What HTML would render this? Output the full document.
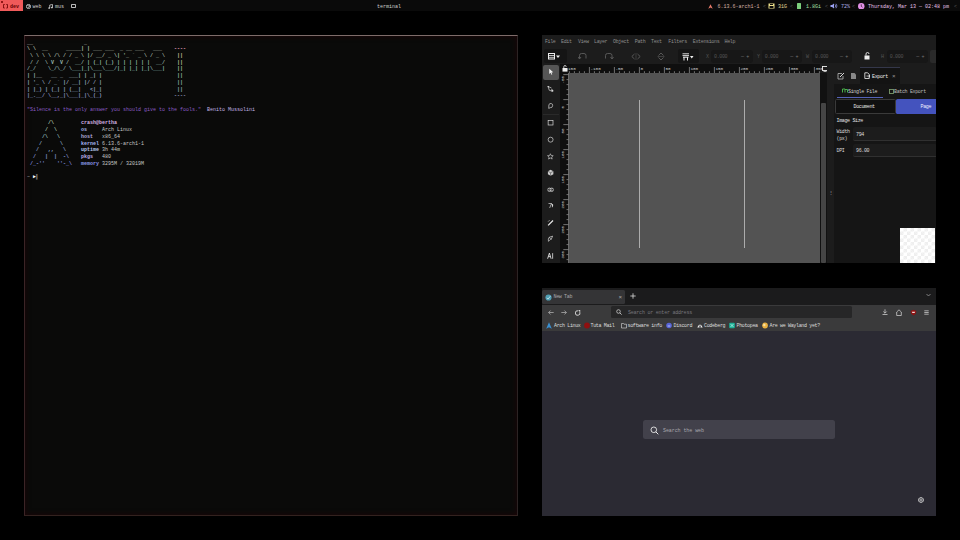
<!DOCTYPE html>
<html><head><meta charset="utf-8">
<style>
*{margin:0;padding:0;box-sizing:border-box}
html,body{width:960px;height:540px;overflow:hidden;background:#000;font-family:"Liberation Mono",monospace;}
.a{position:absolute;white-space:pre}
#bar{position:absolute;left:0;top:0;width:960px;height:11px;background:#0a0a0a;font-size:5px;line-height:11px;color:#d0d0d0;white-space:pre}
#bar .a{top:0;line-height:11px}
#ws1{position:absolute;left:0;top:0;width:23px;height:11px;background:#f05a5a}
#term{position:absolute;left:24px;top:35px;width:494px;height:481px;background:#0a0a09;border-top:1px solid #7e6c6a;border-right:1px solid #2c2424;border-bottom:1px solid #33221f;border-left:1px solid #3b2426;box-shadow:inset 0 0 5px 0.5px rgba(40,0,6,0.6)}
#tt{position:absolute;left:2px;top:3.5px;font-size:5px;line-height:6.73px;white-space:pre;color:#c8c8c8}
#ink{position:absolute;left:542px;top:35px;width:394px;height:228px;background:#1c1c1c;overflow:hidden}
#ink div[style*="font-size"]{margin-top:1.2px;letter-spacing:-0.35px}
#ff div[style*="font-size"]{margin-top:1px;letter-spacing:-0.35px}
#bar div.a:not([style*="background"]):not([style*="border"]){margin-top:1.9px}
#ff{position:absolute;left:542px;top:288px;width:394px;height:228px;background:#2b2a33;overflow:hidden}
</style></head><body>
<div id="bar">
  <div id="ws1"></div>
  <div class="a" style="left:1.2px;top:1.2px;width:1.4px;height:1.4px;background:#700000;border-radius:1px"></div>
  <svg class="a" style="left:2.7px;top:4px" width="5" height="4.5" viewBox="0 0 10 9"><path d="M3.5 1 H1 V8 H3.5 M6.5 1 H9 V8 H6.5" stroke="#6a0000" stroke-width="1.6" fill="none"/></svg><div class="a" style="left:10px;color:#640000;font-weight:bold">dev</div>
  <svg class="a" style="left:26px;top:3.5px" width="5" height="5" viewBox="0 0 10 10"><circle cx="5" cy="5" r="4.2" fill="none" stroke="#ddd" stroke-width="1.6"/><path d="M3 2 L6 5 L4 8 M6 2 L8 6" stroke="#ddd" stroke-width="1.4" fill="none"/></svg>
  <div class="a" style="left:32.5px">web</div>
  <svg class="a" style="left:48px;top:3.5px" width="5" height="5" viewBox="0 0 10 10"><path d="M3.5 8 V2 L9 1 V7" stroke="#ddd" stroke-width="1.5" fill="none"/><circle cx="2.3" cy="8" r="1.7" fill="#ddd"/><circle cx="7.8" cy="7" r="1.7" fill="#ddd"/></svg>
  <div class="a" style="left:55px">mus</div>
  <div class="a" style="left:71px;top:3.6px;width:5px;height:4.6px;border:0.7px solid #bbb;border-radius:0.8px"></div>
  <div class="a" style="left:377px;color:#cfcfcf">terminal</div>
  <svg class="a" style="left:708px;top:3.5px" width="5" height="5" viewBox="0 0 10 10"><path d="M5 0.5 L9.5 9.5 L5 7 L0.5 9.5 Z" fill="#e87a6a"/></svg>
  <div class="a" style="left:717.5px;color:#d9b3a8">6.13.6-arch1-1</div>
  <div class="a" style="left:763px;color:#555">&lt;</div>
  <svg class="a" style="left:768px;top:3px" width="7" height="6" viewBox="0 0 14 12"><path d="M1 1 H13 V11 H1 Z M3 6 H11 V10 H3 Z" fill="#ecdf8a" fill-rule="evenodd"/><rect x="4" y="2" width="6" height="2" fill="#0e0e0e"/></svg>
  <div class="a" style="left:778px;color:#e6dc9a">31G</div>
  <div class="a" style="left:790px;color:#555">&lt;</div>
  <div class="a" style="left:797px;top:3px;width:4px;height:5.5px;background:#7ccf7c;border-radius:0.5px"></div>
  <div class="a" style="left:806px;color:#a8e0a8">1.8Gi</div>
  <div class="a" style="left:825px;color:#555">&lt;</div>
  <svg class="a" style="left:830px;top:3px" width="8" height="6" viewBox="0 0 16 12"><path d="M1 4 H4 L8 1 V11 L4 8 H1 Z" fill="#9aa0f0"/><path d="M10 3 Q13 6 10 9 M12 1.5 Q16 6 12 10.5" stroke="#9aa0f0" stroke-width="1.4" fill="none"/></svg>
  <div class="a" style="left:841px;color:#b0b0e8">72%</div>
  <div class="a" style="left:852px;color:#555">&lt;</div>
  <svg class="a" style="left:858px;top:2.5px" width="6.5" height="6.5" viewBox="0 0 10 10"><circle cx="5" cy="5" r="5" fill="#e291e6"/><path d="M5 2 V5 L7 6.5" stroke="#0e0e0e" stroke-width="1" fill="none"/></svg>
  <div class="a" style="left:868px;color:#e8c2ea">Thursday, Mar 13 &#8212; 02:48 pm</div>
  <div class="a" style="left:954px;color:#555">&lt;</div>
</div>

<div id="term">
<div id="tt"><span style="font-weight:bold;color:#c4c4bc">__                 _                          </span>
<span style="font-weight:bold;color:#b8c0b0">\ \  __      _____| | ___ ___  _ __ ___   ___ </span>
<span style="font-weight:bold;color:#a8bca8"> \ \ \ \ /\ / / _ \ |/ __/ _ \| '_ ` _ \ / _ \</span>
<span style="font-weight:bold;color:#98b8ac"> / /  \ V  V /  __/ | (_| (_) | | | | | |  __/</span>
<span style="font-weight:bold;color:#8cb4b0">/_/    \_/\_/ \___|_|\___\___/|_| |_| |_|\___|</span>
<span style="font-weight:bold;color:#a0b0b8">| |__   __ _  ___| | _| |</span>
<span style="font-weight:bold;color:#98a8c0">| '_ \ / _` |/ __| |/ / |</span>
<span style="font-weight:bold;color:#94a0c4">| |_) | (_| | (__|   &lt;|_|</span>
<span style="font-weight:bold;color:#9098c8">|_.__/ \__,_|\___|_|\_(_)</span>

<span style="color:#8a5cc4">"Silence is the only answer you should give to the fools."</span>  <span style="color:#c4b4e6">Benito Mussolini</span>

<span style="font-weight:bold;color:#b8d0b0">       /\         </span><b style="color:#d4b2e2">crash@bertha</b>
<span style="font-weight:bold;color:#a8c8b4">      /  \        </span><b style="color:#a8b4e8">os</b>     Arch Linux
<span style="font-weight:bold;color:#98c0c0">     /\   \       </span><b style="color:#b4acdc">host</b>   x86_64
<span style="font-weight:bold;color:#90b4cc">    /      \      </span><b style="color:#a4b4f0">kernel</b> 6.13.6-arch1-1
<span style="font-weight:bold;color:#8aa8d4">   /   ,,   \     </span><b style="color:#b8c4ec">uptime</b> 3h 44m
<span style="font-weight:bold;color:#8a9cdc">  /   |  |  -\    </span><b style="color:#bcaee4">pkgs</b>   480
<span style="font-weight:bold;color:#8890e0"> /_-''    ''-_\   </span><b style="color:#8c98ec">memory</b> 3295M / 32019M

<span style="color:#888">~</span> <span style="color:#fff">&#9654;</span><span style="color:#666">&#9612;</span></div>
<div class="a" style="left:149px;top:10.2px;font-size:5px;line-height:6.73px;font-weight:bold"><span style="color:#eaa0c4">----</span>
<span style="color:#d8c0a0"> ||</span>
<span style="color:#c4c4a0"> ||</span>
<span style="color:#a8c0a0"> ||</span>
<span style="color:#98b8a8"> ||</span>
<span style="color:#90b0b0"> ||</span>
<span style="color:#8ca8b8"> ||</span>
<span style="color:#9090b8">----</span></div>
</div>
<div id="ink">
<div class="a" style="left:2.9px;top:2.5px;font-size:5px;line-height:7px;color:#8e8e8e">File</div>
<div class="a" style="left:19.0px;top:2.5px;font-size:5px;line-height:7px;color:#8e8e8e">Edit</div>
<div class="a" style="left:36.0px;top:2.5px;font-size:5px;line-height:7px;color:#8e8e8e">View</div>
<div class="a" style="left:52.0px;top:2.5px;font-size:5px;line-height:7px;color:#8e8e8e">Layer</div>
<div class="a" style="left:71.0px;top:2.5px;font-size:5px;line-height:7px;color:#8e8e8e">Object</div>
<div class="a" style="left:92.8px;top:2.5px;font-size:5px;line-height:7px;color:#8e8e8e">Path</div>
<div class="a" style="left:109.0px;top:2.5px;font-size:5px;line-height:7px;color:#8e8e8e">Text</div>
<div class="a" style="left:126.3px;top:2.5px;font-size:5px;line-height:7px;color:#8e8e8e">Filters</div>
<div class="a" style="left:150.8px;top:2.5px;font-size:5px;line-height:7px;color:#8e8e8e">Extensions</div>
<div class="a" style="left:182.5px;top:2.5px;font-size:5px;line-height:7px;color:#8e8e8e">Help</div>
<div class="a" style="left:2px;top:14.4px;width:22.5px;height:13.6px;background:#151515;border-radius:2px"></div>
<svg class="a" style="left:6px;top:18px" width="13" height="7" viewBox="0 0 13 7"><rect x="0.5" y="0.5" width="6" height="5.5" fill="none" stroke="#eee" stroke-width="1"/><path d="M0.5 2.5H6.5M0.5 4.3H6.5" stroke="#eee" stroke-width="0.8"/><path d="M8 2.5 L12 2.5 L10 5 Z" fill="#eee"/></svg>
<svg class="a" style="left:36.2px;top:16.8px" width="10" height="9" viewBox="0 0 10 9"><path d="M1.5 6.5 V3.5 Q1.5 1.5 3.5 1.5 H6 Q8 1.5 8 3.5 V6.5" stroke="#5e5e5e" stroke-width="0.9" fill="none"/><path d="M0 5 L1.5 7 L3 5" stroke="#5e5e5e" stroke-width="0.9" fill="none"/></svg>
<svg class="a" style="left:61.7px;top:16.8px" width="10" height="9" viewBox="0 0 10 9"><path d="M1.5 6.5 V3.5 Q1.5 1.5 3.5 1.5 H6 Q8 1.5 8 3.5 V6.5" stroke="#5e5e5e" stroke-width="0.9" fill="none"/><path d="M6.5 5 L8 7 L9.5 5" stroke="#5e5e5e" stroke-width="0.9" fill="none"/></svg>
<svg class="a" style="left:88.5px;top:16.8px" width="10" height="9" viewBox="0 0 10 9"><path d="M3.5 2 L0.8 4.5 L3.5 7 M6.5 2 L9.2 4.5 L6.5 7" stroke="#5e5e5e" stroke-width="0.9" fill="none"/><path d="M5 1 V8" stroke="#555" stroke-width="0.6"/></svg>
<svg class="a" style="left:113.7px;top:16.8px" width="10" height="9" viewBox="0 0 10 9"><path d="M2.5 3.5 L5 1 L7.5 3.5 M2.5 5.5 L5 8 L7.5 5.5" stroke="#5e5e5e" stroke-width="0.9" fill="none"/><path d="M1.5 4.5 H8.5" stroke="#555" stroke-width="0.6"/></svg>
<div class="a" style="left:136px;top:14.4px;width:21.4px;height:13.6px;background:#151515;border-radius:2px"></div>
<svg class="a" style="left:140px;top:17.5px" width="12" height="8" viewBox="0 0 12 8"><path d="M0.5 0.8H7M0.5 2.6H7" stroke="#eee" stroke-width="0.9"/><path d="M1 4.2H6.5M2 4.2V7.5M5.5 4.2V7.5" stroke="#eee" stroke-width="1"/><path d="M8 3 L11.5 3 L9.75 5.5 Z" fill="#eee"/></svg>
<div class="a" style="left:164.0px;top:18px;font-size:5px;line-height:7px;color:#555">X</div>
<div class="a" style="left:169.0px;top:14.5px;width:42.0px;height:13px;background:#171717;border-radius:3px"></div>
<div class="a" style="left:172.0px;top:18px;font-size:5px;line-height:7px;color:#555">0.000</div>
<div class="a" style="left:199.0px;top:18px;font-size:5px;line-height:7px;color:#777">&#8212; +</div>
<div class="a" style="left:215.0px;top:18px;font-size:5px;line-height:7px;color:#555">Y</div>
<div class="a" style="left:219.8px;top:14.5px;width:40.5px;height:13px;background:#171717;border-radius:3px"></div>
<div class="a" style="left:222.8px;top:18px;font-size:5px;line-height:7px;color:#555">0.000</div>
<div class="a" style="left:248.3px;top:18px;font-size:5px;line-height:7px;color:#777">&#8212; +</div>
<div class="a" style="left:264.0px;top:18px;font-size:5px;line-height:7px;color:#555">W</div>
<div class="a" style="left:270.0px;top:14.5px;width:40.0px;height:13px;background:#171717;border-radius:3px"></div>
<div class="a" style="left:273.0px;top:18px;font-size:5px;line-height:7px;color:#555">0.000</div>
<div class="a" style="left:298.0px;top:18px;font-size:5px;line-height:7px;color:#777">&#8212; +</div>
<div class="a" style="left:339.0px;top:18px;font-size:5px;line-height:7px;color:#555">H</div>
<div class="a" style="left:344.8px;top:14.5px;width:41.5px;height:13px;background:#171717;border-radius:3px"></div>
<div class="a" style="left:347.8px;top:18px;font-size:5px;line-height:7px;color:#555">0.000</div>
<div class="a" style="left:374.3px;top:18px;font-size:5px;line-height:7px;color:#777">&#8212; +</div>
<svg class="a" style="left:322px;top:17px" width="7" height="8" viewBox="0 0 7 8"><rect x="0.5" y="3.5" width="5" height="4" fill="#eee"/><path d="M2 3.5 V2 Q2 0.5 3.5 0.5 Q5 0.5 5 2" stroke="#eee" stroke-width="0.9" fill="none"/></svg>
<div class="a" style="left:388px;top:14.5px;width:8px;height:13px;background:#2a2a2a;border-radius:2px"></div>
<div class="a" style="left:1px;top:29.6px;width:15.5px;height:15.8px;background:#555555;border-radius:2px"></div>
<div class="a" style="left:1px;top:78.7px;width:16px;height:0.6px;background:#2a2a2a"></div>
<svg class="a" style="left:5.4px;top:33.2px" width="7.5" height="7.5" viewBox="0 0 10 10"><path d="M3 1 L3 8 L4.8 6.3 L6 9 L7 8.5 L5.9 5.9 L8.3 5.8 Z" fill="#f2f2f2"/></svg>
<svg class="a" style="left:5.4px;top:50.2px" width="7.5" height="7.5" viewBox="0 0 10 10"><path d="M1.5 2 L6 4 M1.5 2 L3 7 L8 8.5" stroke="#ddd" stroke-width="0.9" fill="none"/><rect x="0.8" y="1.3" width="1.6" height="1.6" fill="#ddd"/><path d="M6 5 L6 9 L7 8 L8 9.3 L8.5 9 L7.6 7.7 L9 7.6 Z" fill="#ddd"/></svg>
<svg class="a" style="left:5.4px;top:67.2px" width="7.5" height="7.5" viewBox="0 0 10 10"><path d="M2.5 4 Q3 1.5 5.5 2 Q8 2.5 7.5 5 Q7 8 4.5 7.5" stroke="#ddd" stroke-width="0.9" fill="none"/><path d="M2.5 4 L2.3 8.5 L4.5 7.5" stroke="#ddd" stroke-width="0.9" fill="none"/></svg>
<svg class="a" style="left:5.4px;top:84.2px" width="7.5" height="7.5" viewBox="0 0 10 10"><rect x="1.5" y="1.8" width="6.5" height="6.2" fill="none" stroke="#ddd" stroke-width="0.9"/></svg>
<svg class="a" style="left:5.4px;top:101.2px" width="7.5" height="7.5" viewBox="0 0 10 10"><circle cx="4.8" cy="4.9" r="3.3" fill="none" stroke="#ddd" stroke-width="0.9"/></svg>
<svg class="a" style="left:5.4px;top:118.2px" width="7.5" height="7.5" viewBox="0 0 10 10"><path d="M4.5 1 L5.6 3.4 L8.3 3.6 L6.2 5.4 L6.9 8.1 L4.5 6.7 L2.1 8.1 L2.8 5.4 L0.7 3.6 L3.4 3.4 Z" fill="none" stroke="#ddd" stroke-width="0.8"/></svg>
<svg class="a" style="left:5.4px;top:134.2px" width="7.5" height="7.5" viewBox="0 0 10 10"><path d="M4.8 1 L8.5 3 L8.5 7 L4.8 9 L1.2 7 L1.2 3 Z" fill="#ccc"/><path d="M4.8 5 L8.5 3 M4.8 5 L4.8 9 M4.8 5 L1.2 3" stroke="#1e1e1e" stroke-width="0.6"/></svg>
<svg class="a" style="left:5.4px;top:150.8px" width="7.5" height="7.5" viewBox="0 0 10 10"><circle cx="3.3" cy="5" r="2.3" fill="none" stroke="#ddd" stroke-width="0.8"/><circle cx="6.3" cy="5" r="2.3" fill="none" stroke="#ddd" stroke-width="0.8"/><path d="M1 3.5 H8.5 M1 6.5 H8.5" stroke="#ddd" stroke-width="0.5"/></svg>
<svg class="a" style="left:5.4px;top:167.2px" width="7.5" height="7.5" viewBox="0 0 10 10"><path d="M2 2 L6 2 L3.5 8 M6 2 Q8.5 4 7 7" stroke="#ddd" stroke-width="0.9" fill="none"/><path d="M6 2 L8.3 3.5 L7 7 Z" fill="#ddd"/></svg>
<svg class="a" style="left:5.4px;top:184.2px" width="7.5" height="7.5" viewBox="0 0 10 10"><path d="M1.5 8.5 L8 2" stroke="#eee" stroke-width="1.6"/><path d="M1.5 3.5 L3.5 1.5" stroke="#eee" stroke-width="0.8"/></svg>
<svg class="a" style="left:5.4px;top:200.2px" width="7.5" height="7.5" viewBox="0 0 10 10"><path d="M2 8.5 Q1 5 3 3 M3 3 L7.5 1.5 L5.5 6 Z" stroke="#ddd" stroke-width="0.9" fill="none"/><path d="M2 8.5 L5 5.5" stroke="#ddd" stroke-width="0.8"/></svg>
<svg class="a" style="left:5.4px;top:217.2px" width="7.5" height="7.5" viewBox="0 0 10 10"><path d="M0.8 9 L3.2 1.5 L5.5 9 M1.8 6.2 H4.6" stroke="#f2f2f2" stroke-width="1.1" fill="none"/><path d="M7.5 1.5 V9" stroke="#f2f2f2" stroke-width="1"/></svg>
<div class="a" style="left:17.7px;top:29px;width:260.3px;height:9px;background:#0f0f0f"></div>
<div class="a" style="left:17.7px;top:38px;width:8.6px;height:190px;background:#0f0f0f"></div>
<div class="a" style="left:26.3px;top:38px;width:251.7px;height:190px;background:#535353"></div>
<div class="a" style="left:25.8px;top:38px;width:0.8px;height:190px;background:#6a6a6a"></div>
<div class="a" style="left:97px;top:64.6px;width:1px;height:148.2px;background:#acacac"></div>
<div class="a" style="left:202px;top:64.6px;width:1px;height:148.2px;background:#acacac"></div>
<svg class="a" style="left:0;top:0" width="394" height="228" viewBox="0 0 394 228"><path d="M27.40 36.2 V38.0" stroke="#d0d0d0" stroke-width="0.5"/><path d="M32.40 36.2 V38.0" stroke="#d0d0d0" stroke-width="0.5"/><path d="M37.40 36.2 V38.0" stroke="#d0d0d0" stroke-width="0.5"/><path d="M42.40 36.2 V38.0" stroke="#d0d0d0" stroke-width="0.5"/><text x="23.4" y="35.4" font-size="4.3" fill="#d0d0d0" font-family="Liberation Mono">-150</text><path d="M47.40 32.0 V38.0" stroke="#d0d0d0" stroke-width="0.5"/><path d="M52.40 36.2 V38.0" stroke="#d0d0d0" stroke-width="0.5"/><path d="M57.40 36.2 V38.0" stroke="#d0d0d0" stroke-width="0.5"/><path d="M62.40 36.2 V38.0" stroke="#d0d0d0" stroke-width="0.5"/><path d="M67.40 36.2 V38.0" stroke="#d0d0d0" stroke-width="0.5"/><text x="48.4" y="35.4" font-size="4.3" fill="#d0d0d0" font-family="Liberation Mono">-100</text><path d="M72.40 32.0 V38.0" stroke="#d0d0d0" stroke-width="0.5"/><path d="M77.40 36.2 V38.0" stroke="#d0d0d0" stroke-width="0.5"/><path d="M82.40 36.2 V38.0" stroke="#d0d0d0" stroke-width="0.5"/><path d="M87.40 36.2 V38.0" stroke="#d0d0d0" stroke-width="0.5"/><path d="M92.40 36.2 V38.0" stroke="#d0d0d0" stroke-width="0.5"/><text x="73.4" y="35.4" font-size="4.3" fill="#d0d0d0" font-family="Liberation Mono">-50</text><path d="M97.40 32.0 V38.0" stroke="#d0d0d0" stroke-width="0.5"/><path d="M102.40 36.2 V38.0" stroke="#d0d0d0" stroke-width="0.5"/><path d="M107.40 36.2 V38.0" stroke="#d0d0d0" stroke-width="0.5"/><path d="M112.40 36.2 V38.0" stroke="#d0d0d0" stroke-width="0.5"/><path d="M117.40 36.2 V38.0" stroke="#d0d0d0" stroke-width="0.5"/><text x="98.4" y="35.4" font-size="4.3" fill="#d0d0d0" font-family="Liberation Mono">0</text><path d="M122.40 32.0 V38.0" stroke="#d0d0d0" stroke-width="0.5"/><path d="M127.40 36.2 V38.0" stroke="#d0d0d0" stroke-width="0.5"/><path d="M132.40 36.2 V38.0" stroke="#d0d0d0" stroke-width="0.5"/><path d="M137.40 36.2 V38.0" stroke="#d0d0d0" stroke-width="0.5"/><path d="M142.40 36.2 V38.0" stroke="#d0d0d0" stroke-width="0.5"/><text x="123.4" y="35.4" font-size="4.3" fill="#d0d0d0" font-family="Liberation Mono">50</text><path d="M147.40 32.0 V38.0" stroke="#d0d0d0" stroke-width="0.5"/><path d="M152.40 36.2 V38.0" stroke="#d0d0d0" stroke-width="0.5"/><path d="M157.40 36.2 V38.0" stroke="#d0d0d0" stroke-width="0.5"/><path d="M162.40 36.2 V38.0" stroke="#d0d0d0" stroke-width="0.5"/><path d="M167.40 36.2 V38.0" stroke="#d0d0d0" stroke-width="0.5"/><text x="148.4" y="35.4" font-size="4.3" fill="#d0d0d0" font-family="Liberation Mono">100</text><path d="M172.40 32.0 V38.0" stroke="#d0d0d0" stroke-width="0.5"/><path d="M177.40 36.2 V38.0" stroke="#d0d0d0" stroke-width="0.5"/><path d="M182.40 36.2 V38.0" stroke="#d0d0d0" stroke-width="0.5"/><path d="M187.40 36.2 V38.0" stroke="#d0d0d0" stroke-width="0.5"/><path d="M192.40 36.2 V38.0" stroke="#d0d0d0" stroke-width="0.5"/><text x="173.4" y="35.4" font-size="4.3" fill="#d0d0d0" font-family="Liberation Mono">150</text><path d="M197.40 32.0 V38.0" stroke="#d0d0d0" stroke-width="0.5"/><path d="M202.40 36.2 V38.0" stroke="#d0d0d0" stroke-width="0.5"/><path d="M207.40 36.2 V38.0" stroke="#d0d0d0" stroke-width="0.5"/><path d="M212.40 36.2 V38.0" stroke="#d0d0d0" stroke-width="0.5"/><path d="M217.40 36.2 V38.0" stroke="#d0d0d0" stroke-width="0.5"/><text x="198.4" y="35.4" font-size="4.3" fill="#d0d0d0" font-family="Liberation Mono">200</text><path d="M222.40 32.0 V38.0" stroke="#d0d0d0" stroke-width="0.5"/><path d="M227.40 36.2 V38.0" stroke="#d0d0d0" stroke-width="0.5"/><path d="M232.40 36.2 V38.0" stroke="#d0d0d0" stroke-width="0.5"/><path d="M237.40 36.2 V38.0" stroke="#d0d0d0" stroke-width="0.5"/><path d="M242.40 36.2 V38.0" stroke="#d0d0d0" stroke-width="0.5"/><text x="223.4" y="35.4" font-size="4.3" fill="#d0d0d0" font-family="Liberation Mono">250</text><path d="M247.40 32.0 V38.0" stroke="#d0d0d0" stroke-width="0.5"/><path d="M252.40 36.2 V38.0" stroke="#d0d0d0" stroke-width="0.5"/><path d="M257.40 36.2 V38.0" stroke="#d0d0d0" stroke-width="0.5"/><path d="M262.40 36.2 V38.0" stroke="#d0d0d0" stroke-width="0.5"/><path d="M267.40 36.2 V38.0" stroke="#d0d0d0" stroke-width="0.5"/><text x="248.4" y="35.4" font-size="4.3" fill="#d0d0d0" font-family="Liberation Mono">300</text><path d="M272.40 32.0 V38.0" stroke="#d0d0d0" stroke-width="0.5"/><path d="M277.40 36.2 V38.0" stroke="#d0d0d0" stroke-width="0.5"/><text x="273.4" y="35.4" font-size="4.3" fill="#d0d0d0" font-family="Liberation Mono">350</text><path d="M21.3 39.60 H26.3" stroke="#d0d0d0" stroke-width="0.5"/><path d="M24.5 44.60 H26.3" stroke="#d0d0d0" stroke-width="0.5"/><path d="M24.5 49.60 H26.3" stroke="#d0d0d0" stroke-width="0.5"/><path d="M24.5 54.60 H26.3" stroke="#d0d0d0" stroke-width="0.5"/><path d="M24.5 59.60 H26.3" stroke="#d0d0d0" stroke-width="0.5"/><text transform="translate(22.3 48.6) rotate(-90)" font-size="4.3" fill="#d0d0d0" font-family="Liberation Mono">-50</text><path d="M21.3 64.60 H26.3" stroke="#d0d0d0" stroke-width="0.5"/><path d="M24.5 69.60 H26.3" stroke="#d0d0d0" stroke-width="0.5"/><path d="M24.5 74.60 H26.3" stroke="#d0d0d0" stroke-width="0.5"/><path d="M24.5 79.60 H26.3" stroke="#d0d0d0" stroke-width="0.5"/><path d="M24.5 84.60 H26.3" stroke="#d0d0d0" stroke-width="0.5"/><text transform="translate(22.3 73.6) rotate(-90)" font-size="4.3" fill="#d0d0d0" font-family="Liberation Mono">0</text><path d="M21.3 89.60 H26.3" stroke="#d0d0d0" stroke-width="0.5"/><path d="M24.5 94.60 H26.3" stroke="#d0d0d0" stroke-width="0.5"/><path d="M24.5 99.60 H26.3" stroke="#d0d0d0" stroke-width="0.5"/><path d="M24.5 104.60 H26.3" stroke="#d0d0d0" stroke-width="0.5"/><path d="M24.5 109.60 H26.3" stroke="#d0d0d0" stroke-width="0.5"/><text transform="translate(22.3 98.6) rotate(-90)" font-size="4.3" fill="#d0d0d0" font-family="Liberation Mono">50</text><path d="M21.3 114.60 H26.3" stroke="#d0d0d0" stroke-width="0.5"/><path d="M24.5 119.60 H26.3" stroke="#d0d0d0" stroke-width="0.5"/><path d="M24.5 124.60 H26.3" stroke="#d0d0d0" stroke-width="0.5"/><path d="M24.5 129.60 H26.3" stroke="#d0d0d0" stroke-width="0.5"/><path d="M24.5 134.60 H26.3" stroke="#d0d0d0" stroke-width="0.5"/><text transform="translate(22.3 123.6) rotate(-90)" font-size="4.3" fill="#d0d0d0" font-family="Liberation Mono">100</text><path d="M21.3 139.60 H26.3" stroke="#d0d0d0" stroke-width="0.5"/><path d="M24.5 144.60 H26.3" stroke="#d0d0d0" stroke-width="0.5"/><path d="M24.5 149.60 H26.3" stroke="#d0d0d0" stroke-width="0.5"/><path d="M24.5 154.60 H26.3" stroke="#d0d0d0" stroke-width="0.5"/><path d="M24.5 159.60 H26.3" stroke="#d0d0d0" stroke-width="0.5"/><text transform="translate(22.3 148.6) rotate(-90)" font-size="4.3" fill="#d0d0d0" font-family="Liberation Mono">150</text><path d="M21.3 164.60 H26.3" stroke="#d0d0d0" stroke-width="0.5"/><path d="M24.5 169.60 H26.3" stroke="#d0d0d0" stroke-width="0.5"/><path d="M24.5 174.60 H26.3" stroke="#d0d0d0" stroke-width="0.5"/><path d="M24.5 179.60 H26.3" stroke="#d0d0d0" stroke-width="0.5"/><path d="M24.5 184.60 H26.3" stroke="#d0d0d0" stroke-width="0.5"/><text transform="translate(22.3 173.6) rotate(-90)" font-size="4.3" fill="#d0d0d0" font-family="Liberation Mono">200</text><path d="M21.3 189.60 H26.3" stroke="#d0d0d0" stroke-width="0.5"/><path d="M24.5 194.60 H26.3" stroke="#d0d0d0" stroke-width="0.5"/><path d="M24.5 199.60 H26.3" stroke="#d0d0d0" stroke-width="0.5"/><path d="M24.5 204.60 H26.3" stroke="#d0d0d0" stroke-width="0.5"/><path d="M24.5 209.60 H26.3" stroke="#d0d0d0" stroke-width="0.5"/><text transform="translate(22.3 198.6) rotate(-90)" font-size="4.3" fill="#d0d0d0" font-family="Liberation Mono">250</text><path d="M21.3 214.60 H26.3" stroke="#d0d0d0" stroke-width="0.5"/><path d="M24.5 219.60 H26.3" stroke="#d0d0d0" stroke-width="0.5"/><path d="M24.5 224.60 H26.3" stroke="#d0d0d0" stroke-width="0.5"/><text transform="translate(22.3 223.6) rotate(-90)" font-size="4.3" fill="#d0d0d0" font-family="Liberation Mono">300</text></svg>
<svg class="a" style="left:19.5px;top:30px" width="6" height="7" viewBox="0 0 6 7"><rect x="0.5" y="3" width="5" height="3.6" fill="#eee"/><path d="M1.8 3 V1.8 Q1.8 0.5 3 0.5 Q4.2 0.5 4.2 1.8" stroke="#eee" stroke-width="0.8" fill="none"/></svg>
<svg class="a" style="left:279.5px;top:30.5px" width="6" height="6" viewBox="0 0 6 6"><rect x="0.5" y="0.5" width="5" height="4" fill="none" stroke="#eee" stroke-width="0.9"/><path d="M1.5 5.6 H4.5" stroke="#eee" stroke-width="0.8"/></svg>
<div class="a" style="left:278px;top:38px;width:7px;height:190px;background:#111"></div>
<div class="a" style="left:279.2px;top:67.6px;width:4.8px;height:160.4px;background:#454545;border-radius:1px"></div>
<div class="a" style="left:285px;top:29px;width:109px;height:199px;background:#1c1c1c"></div>
<div class="a" style="left:291.5px;top:49px;width:102.5px;height:179px;background:#151515"></div>
<div class="a" style="left:286.5px;top:155px;font-size:4px;line-height:4px;color:#aaa">&#8942;</div>
<svg class="a" style="left:295px;top:36.5px" width="8" height="8" viewBox="0 0 8 8"><path d="M1 1.5 H5 M1 1.5 V7 H6 V4" stroke="#bbb" stroke-width="0.8" fill="none"/><path d="M3 5 L7 1" stroke="#ddd" stroke-width="1"/></svg>
<svg class="a" style="left:308px;top:36.5px" width="7" height="8" viewBox="0 0 7 8"><path d="M1 1 H4.5 L6 2.5 V7 H1 Z" fill="#888"/></svg>
<div class="a" style="left:318px;top:32.4px;width:40px;height:16.6px;background:#131313;border-top:1px solid #34374a"></div>
<svg class="a" style="left:321.5px;top:37px" width="6.5" height="7.3" viewBox="0 0 8 9"><path d="M1 1 H4.5 L6.5 3 V8 H1 Z" fill="none" stroke="#f0f0f0" stroke-width="1"/><path d="M3 5 H7.5 M6 3.6 L7.6 5 L6 6.4" stroke="#f0f0f0" stroke-width="0.9" fill="none"/></svg>
<div class="a" style="left:330px;top:37.4px;font-size:5px;line-height:7px;color:#eee">Export</div>
<div class="a" style="left:350px;top:36.6px;font-size:6px;line-height:7px;color:#999">&#215;</div>
<svg class="a" style="left:300px;top:53.2px" width="6" height="5" viewBox="0 0 6 5"><path d="M0.5 4.5 V1 H3 V4.5 M3 1.5 H5.5 V4.5" stroke="#49b04a" stroke-width="1" fill="none"/></svg>
<div class="a" style="left:306px;top:52.8px;font-size:5px;line-height:7px;color:#cfcfcf">Single File</div>
<div class="a" style="left:295px;top:61.5px;width:46px;height:0.9px;background:#5563b8"></div>
<svg class="a" style="left:347px;top:53.6px" width="5" height="5" viewBox="0 0 5 5"><rect x="0.5" y="0.5" width="4" height="4" fill="none" stroke="#7a9a6a" stroke-width="0.9"/></svg>
<div class="a" style="left:352px;top:52.8px;font-size:5px;line-height:7px;color:#bdbdbd">Batch Export</div>
<div class="a" style="left:292.6px;top:64px;width:61px;height:14.6px;background:#101010;border:0.8px solid #3a3a3a;border-radius:1.5px"></div>
<div class="a" style="left:311.5px;top:67.8px;font-size:5px;line-height:7px;color:#e6e6e6">Document</div>
<div class="a" style="left:354px;top:64px;width:42px;height:14.6px;background:#4453be;border-radius:1.5px"></div>
<div class="a" style="left:378.5px;top:67.8px;font-size:5px;line-height:7px;color:#eef">Page</div>
<div class="a" style="left:294.5px;top:82px;font-size:5px;line-height:7px;color:#e0e0e0">Image Size</div>
<div class="a" style="left:294.5px;top:93px;font-size:5px;line-height:6.6px;color:#d8d8d8">Width<br>(px)</div>
<div class="a" style="left:311.3px;top:92.2px;width:84px;height:14.3px;background:#1c1c1c;border-bottom:0.8px solid #303030;border-radius:2px"></div>
<div class="a" style="left:314px;top:96px;font-size:5px;line-height:7px;color:#ddd">794</div>
<div class="a" style="left:294.5px;top:112px;font-size:5px;line-height:7px;color:#d8d8d8">DPI</div>
<div class="a" style="left:311.3px;top:108.8px;width:84px;height:13.7px;background:#1c1c1c;border-bottom:0.8px solid #303030;border-radius:2px"></div>
<div class="a" style="left:314px;top:112px;font-size:5px;line-height:7px;color:#ddd">96.00</div>
<div class="a" style="left:358px;top:193px;width:35px;height:35px;background-color:#fff;background-image:linear-gradient(45deg,#efefef 25%,transparent 25%,transparent 75%,#efefef 75%),linear-gradient(45deg,#efefef 25%,transparent 25%,transparent 75%,#efefef 75%);background-size:7px 7px;background-position:0 0,3.5px 3.5px"></div>
</div>
<div id="ff">
<div class="a" style="left:0;top:0;width:394px;height:17px;background:#1b1b1c"></div>
<div class="a" style="left:0;top:2px;width:83px;height:13.5px;background:#343436;border-radius:1.5px"></div>
<svg class="a" style="left:3px;top:5.5px" width="7" height="7" viewBox="0 0 10 10"><circle cx="5" cy="5" r="4.4" fill="#4f9fb4"/><path d="M2.5 5.5 L4.3 7.3 L7.8 3" stroke="#c0e0e4" stroke-width="1.3" fill="none"/></svg>
<div class="a" style="left:11.5px;top:4.6px;font-size:5px;line-height:7px;color:#a8a8aa">New Tab</div>
<div class="a" style="left:76.5px;top:4.6px;font-size:6px;line-height:7px;color:#aaa">&#215;</div>
<svg class="a" style="left:88px;top:5px" width="6" height="6" viewBox="0 0 6 6"><path d="M3 0.3 V5.7 M0.3 3 H5.7" stroke="#ddd" stroke-width="0.8"/></svg>
<svg class="a" style="left:384px;top:5.4px" width="5" height="4" viewBox="0 0 5 4"><path d="M0.5 1 L2.5 3 L4.5 1" stroke="#aaa" stroke-width="0.7" fill="none"/></svg>
<div class="a" style="left:0;top:17px;width:394px;height:25.5px;background:#3a3a3b"></div>
<svg class="a" style="left:6px;top:22px" width="6" height="5" viewBox="0 0 6 5"><path d="M5.7 2.5 H0.7 M2.6 0.5 L0.6 2.5 L2.6 4.5" stroke="#bbb" stroke-width="0.7" fill="none"/></svg>
<svg class="a" style="left:19px;top:22px" width="6" height="5" viewBox="0 0 6 5"><path d="M0.3 2.5 H5.3 M3.4 0.5 L5.4 2.5 L3.4 4.5" stroke="#bbb" stroke-width="0.7" fill="none"/></svg>
<svg class="a" style="left:32.5px;top:21.5px" width="6" height="6" viewBox="0 0 6 6"><path d="M4.8 2.2 A2.3 2.3 0 1 1 3.2 0.8" stroke="#eee" stroke-width="0.8" fill="none"/><path d="M3.3 0 L5.3 0.2 L5.1 2.3 Z" fill="#eee"/></svg>
<div class="a" style="left:69px;top:18px;width:240.7px;height:11.5px;background:#262627;border-radius:1.5px"></div>
<svg class="a" style="left:74px;top:21px" width="6" height="6" viewBox="0 0 6 6"><circle cx="2.5" cy="2.5" r="1.8" stroke="#ddd" stroke-width="0.7" fill="none"/><path d="M3.8 3.8 L5.6 5.6" stroke="#ddd" stroke-width="0.8"/></svg>
<div class="a" style="left:86px;top:20.5px;font-size:5px;line-height:7px;color:#77767c;letter-spacing:-0.22px">Search or enter address</div>
<svg class="a" style="left:339.5px;top:21px" width="6" height="6" viewBox="0 0 6 6"><path d="M3 0.3 V4 M1.3 2.5 L3 4.2 L4.7 2.5 M0.5 5.5 H5.5" stroke="#ddd" stroke-width="0.7" fill="none"/></svg>
<svg class="a" style="left:353.5px;top:20.5px" width="6" height="7" viewBox="0 0 6 7"><path d="M0.7 6.5 V3 L3 0.8 L5.3 3 V6.5 Z" stroke="#ddd" stroke-width="0.7" fill="none"/></svg>
<svg class="a" style="left:367.5px;top:20.5px" width="7" height="7" viewBox="0 0 7 7"><path d="M3.5 0.8 L6.2 1.8 V3.6 Q6.2 5.4 3.5 6.4 Q0.8 5.4 0.8 3.6 V1.8 Z" fill="#8c1414"/><path d="M1.8 2.8 H5.2 L4.6 4 H2.4 Z" fill="#f4d8d8"/></svg>
<svg class="a" style="left:382px;top:21.5px" width="5" height="5" viewBox="0 0 5 5"><path d="M0.3 0.8 H4.7 M0.3 2.5 H4.7 M0.3 4.2 H4.7" stroke="#ddd" stroke-width="0.7"/></svg>
<svg class="a" style="left:4.0px;top:33.5px" width="6" height="7" viewBox="0 0 6 7"><path d="M3 0.3 L5.8 6.8 L3 5.2 L0.2 6.8 Z" fill="#3a8fd0"/></svg>
<div class="a" style="left:12.0px;top:33.5px;font-size:5px;line-height:7px;color:#dcdcdc">Arch Linux</div>
<svg class="a" style="left:42.0px;top:33.5px" width="6" height="7" viewBox="0 0 6 7"><circle cx="3" cy="3.5" r="2.9" fill="#8f1010"/></svg>
<div class="a" style="left:48.5px;top:33.5px;font-size:5px;line-height:7px;color:#dcdcdc">Tuta Mail</div>
<svg class="a" style="left:78.5px;top:33.5px" width="6" height="7" viewBox="0 0 6 7"><path d="M0.5 1.5 H2.5 L3 2.2 H5.5 V6 H0.5 Z" stroke="#ddd" stroke-width="0.6" fill="none"/></svg>
<div class="a" style="left:85.5px;top:33.5px;font-size:5px;line-height:7px;color:#dcdcdc">software info</div>
<svg class="a" style="left:124.0px;top:33.5px" width="6" height="7" viewBox="0 0 6 7"><circle cx="3" cy="3.5" r="2.8" fill="#5865d6"/><path d="M1.7 4 H4.3" stroke="#cfd4ff" stroke-width="0.8"/></svg>
<div class="a" style="left:131.5px;top:33.5px;font-size:5px;line-height:7px;color:#dcdcdc">Discord</div>
<svg class="a" style="left:155.0px;top:33.5px" width="6" height="7" viewBox="0 0 6 7"><path d="M0.3 5.5 Q3 -0.5 5.7 5.5 Z" fill="#f0f0f0"/><path d="M3 2.5 L4 5.5 H2 Z" fill="#38383c"/></svg>
<div class="a" style="left:162.0px;top:33.5px;font-size:5px;line-height:7px;color:#dcdcdc">Codeberg</div>
<svg class="a" style="left:187.0px;top:33.5px" width="6" height="7" viewBox="0 0 6 7"><rect x="0.2" y="0.7" width="5.6" height="5.6" rx="1" fill="#1bb096"/><path d="M1.5 2 L4.5 5 M4.5 2 L1.5 5" stroke="#e0fff8" stroke-width="0.6"/></svg>
<div class="a" style="left:194.5px;top:33.5px;font-size:5px;line-height:7px;color:#dcdcdc">Photopea</div>
<svg class="a" style="left:220.0px;top:33.5px" width="6" height="7" viewBox="0 0 6 7"><circle cx="3" cy="3.5" r="2.9" fill="#e8b040"/><circle cx="2.3" cy="3" r="1.2" fill="#f8e0a0"/></svg>
<div class="a" style="left:227.5px;top:33.5px;font-size:5px;line-height:7px;color:#dcdcdc">Are we Wayland yet?</div>
<div class="a" style="left:101.0px;top:131.8px;width:191.5px;height:19.2px;background:#42414b;border-radius:2.5px"></div>
<svg class="a" style="left:107.5px;top:137.5px" width="9" height="9" viewBox="0 0 9 9"><circle cx="3.8" cy="3.8" r="2.8" stroke="#e8e8e8" stroke-width="0.9" fill="none"/><path d="M5.8 5.8 L8.3 8.3" stroke="#e8e8e8" stroke-width="1"/></svg>
<div class="a" style="left:121.0px;top:138.5px;font-size:5px;line-height:7px;color:#a8a7ad;letter-spacing:-0.08px">Search the web</div>
<svg class="a" style="left:375.5px;top:208.5px" width="6" height="6" viewBox="0 0 6 6"><circle cx="3" cy="3" r="1.1" stroke="#e0e0e0" stroke-width="0.7" fill="none"/><path d="M3 0.4 L5.3 1.7 V4.3 L3 5.6 L0.7 4.3 V1.7 Z" stroke="#e0e0e0" stroke-width="0.8" fill="none"/></svg>
</div>
</body></html>
